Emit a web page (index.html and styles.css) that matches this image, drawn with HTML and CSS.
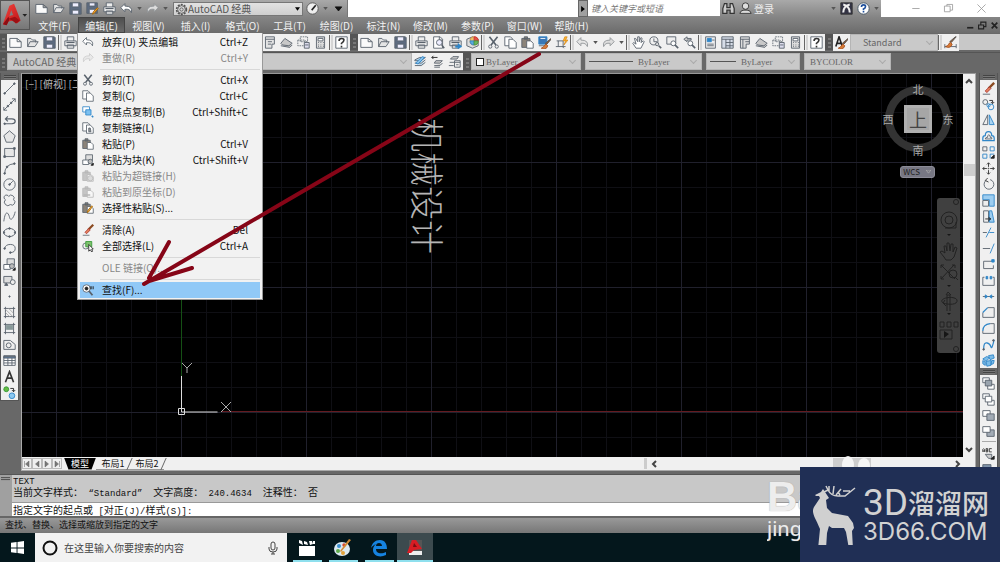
FILE: index.html
```html
<!DOCTYPE html>
<html lang="zh-CN">
<head>
<meta charset="utf-8">
<title>AutoCAD 经典</title>
<link rel="stylesheet" href="styles.css">
</head>
<body>
<header class="head">
  <button class="app" aria-label="应用程序菜单">
    <svg viewBox="0 0 30 30"><defs><linearGradient id="red" x1="0" y1="0" x2="1" y2="1"><stop offset="0" stop-color="#f5463f"/><stop offset="1" stop-color="#b81116"/></linearGradient></defs><path d="M2 25 9 5l5-2 7 18-4 3-4-3-5 1-2 4z" fill="url(#red)"/><path d="m2 25 4 1 3-6-1-3z" fill="#8c0d12"/><path d="m8 19 7-2 5 4-4 3-4-3z" fill="#9d1014"/><path d="m9 16 2-6 2 5z" fill="#7d7f82"/><path d="M23 14h5l-2.500 3z" fill="#222"/></svg>
  </button>
  <div class="bars">
    <div class="title">
      <div class="quick" data-icons="new open save saveas print undo . redo2 ."></div>
      <label class="space"><svg viewBox="0 0 16 16"><g fill="none" stroke="#555"><circle cx="8" cy="8" r="6" stroke-width="2" stroke-dasharray="2.5 1.3"/><circle cx="8" cy="8" r="4.7"/><circle cx="8" cy="8" r="2"/></g></svg><select aria-label="工作空间"><option>AutoCAD 经典</option></select><svg class="drop" viewBox="0 0 6 4"><path d="M0 0h6L3 4z"/></svg></label>
      <div class="quick" data-icons="gauge . down"></div>
      <div class="blank"></div>
      <button class="play" aria-label="展开搜索"><svg viewBox="0 0 5 8"><path d="m0 0 5 4-5 4z"/></svg></button>
      <input class="find" aria-label="搜索" placeholder="键入关键字或短语">
      <div class="info"><span data-icons="binoc user"></span><button class="login">登录</button><span data-icons=". exch"></span><span data-icons="help2 ."></span></div>
      <div class="win" data-icons="min restore close"></div>
    </div>
    <nav class="menus">
      <button>文件(F)</button><button class="on">编辑(E)</button><button>视图(V)</button><button>插入(I)</button><button>格式(O)</button><button>工具(T)</button><button>绘图(D)</button><button>标注(N)</button><button>修改(M)</button><button>参数(P)</button><button>窗口(W)</button><button>帮助(H)</button>
      <span class="docwin" data-icons="dmin drestore dclose"></span>
    </nav>
  </div>
</header>

<div class="row">
  <i class="grip"></i>
  <div class="tools" data-icons="new open save | print preview publish globe | cut copy paste match | block undo redo | sheet markup qset calc | help"></div>
  <i class="grip"></i>
  <div class="tools" data-icons="new open save | print preview publish globe | cut copy paste match block | redo3 . redo2 . | hand zoomt zoomw zoomp | props dcenter palette markup qset calc | help"></div>
  <i class="grip"></i>
  <div class="tools" data-icons="tstyle"></div>
  <label class="combo std"><select aria-label="文字样式"><option>Standard</option></select></label>
  <div class="tools" data-icons="| dstyle"></div>
  <div class="rest"></div>
</div>

<div class="row second">
  <i class="grip"></i>
  <label class="combo ws"><select aria-label="工作空间"><option>AutoCAD 经典</option></select></label>
  <div class="tools" data-icons="layer layerp layers"></div>
  <i class="grip"></i>
  <label class="combo serif color"><b></b><select aria-label="颜色"><option>ByLayer</option></select></label>
  <label class="combo serif ltype"><hr><select aria-label="线型"><option>ByLayer</option></select></label>
  <label class="combo serif lweight"><hr><select aria-label="线宽"><option>ByLayer</option></select></label>
  <label class="combo serif pstyle"><select aria-label="打印样式"><option>BYCOLOR</option></select></label>
</div>

<main class="main">
  <aside class="side">
    <i class="hgrip"></i>
    <div class="stack" data-icons="line xline pline polygon rect arc circle cloud spline ellipse earc insert mkblock point hatch gradient region table mtext addsel"></div>
  </aside>
  <section class="doc">
    <div class="canvas">
      <div class="view">[−] [俯视] [二</div>
      <svg class="ucs" viewBox="0 0 54 56"><path d="M4.500 14v36h36" stroke="#ddd" fill="none"/><path d="M1.500 46.500h6v6h-6z" stroke="#ddd" fill="none"/><path d="m5 1 5 5 5-5m-5 5v5M44 40l10 10m0-10L44 50" stroke="#aaa" fill="none"/></svg>
      <div class="cadtext">机械设计</div>
      <div class="cube"><button class="n">北</button><button class="w">西</button><button class="top">上</button><button class="e">东</button><button class="s">南</button></div>
      <button class="wcs">WCS <svg viewBox="0 0 8 5"><path d="M1 0h6L4 4z" fill="none" stroke="#aaa"/></svg></button>
      <svg class="navbar" viewBox="0 0 23 155"><rect width="23" height="155" rx="3" fill="#404040"/><g fill="none" stroke="#222"><circle cx="19" cy="4" r="2.5"/><circle cx="19" cy="151" r="2.5"/><circle cx="12" cy="22" r="8"/><circle cx="12" cy="22" r="4"/><path d="M8 30h11v-6"/><path d="M7 59 3 54l2-1 3 2-1-7 2 0 1 5 0-8 2 0 1 8 1-7 2 0v8l2-5 2 1-3 9-3 3H9z"/><path d="m4 67 14 14M17 67 4 81M4 70v-3h3m8 0h3v3M4 78v3h3"/><circle cx="16" cy="76" r="4"/><path d="m18 79 3 3M10 113V97h3v16M9 97l2-3 3 3M6 105c-6-5 12-8 14-3 1 5-8 5-14 3l2-3m-2 3 3 3"/><path d="M3 124h4v5H3zm7 0h4v5h-4zm7 0h4v5h-4zM3 132h12v9H3z"/></g><path d="m7 133 5 3-5 4zM10 36h4l-2 2zM10 87h4l-2 2zM10 115h4l-2 2z" fill="#161616"/></svg>
    </div>
    <div class="vbar"><button aria-label="向上"><svg viewBox="0 0 8 6"><path d="m1 5 3-3 3 3"/></svg></button><i></i><button aria-label="向下"><svg viewBox="0 0 8 6"><path d="m1 1 3 3 3-3"/></svg></button></div>
    <div class="tabs">
      <div class="steps" data-icons="first prev next last"></div>
      <button class="tab on">模型</button><button class="tab">布局1</button><button class="tab">布局2</button>
      <div class="fill"></div>
      <i class="split"></i>
      <div class="hbar"><button aria-label="向左"><svg viewBox="0 0 6 8"><path d="M5 1 2 4l3 3"/></svg></button><i></i><button aria-label="向右"><svg viewBox="0 0 6 8"><path d="m1 1 3 3-3 3"/></svg></button></div>
    </div>
  </section>
  <aside class="side right">
    <i class="hgrip"></i>
    <div class="stack" data-icons="erase mcopy mirror offset array move rotate scale stretch trim extend breakp break join chamfer fillet blend explode"></div>
    <i class="hgrip"></i>
    <div class="stack" data-icons="front back above under | abc hback"></div>
  </aside>
</main>

<section class="command">
  <i class="cgrip"></i>
  <div class="lines">
    <div class="log"><p><span>TEXT</span></p><p>当前文字样式：<span> “Standard”&nbsp; </span>文字高度：<span> 240.4634&nbsp; </span>注释性：<span> </span>否</p></div>
    <label class="prompt">指定文字的起点或<span> [</span>对正<span>(J)/</span>样式<span>(S)]:</span><input aria-label="命令行"></label>
  </div>
</section>
<div class="status">查找、替换、选择或缩放到指定的文字</div>
<footer class="task">
  <button class="start" aria-label="开始"><svg viewBox="0 0 14 14"><path d="m0 2 6-1v6H0zm7-1 7-1v7H7zM0 8h6v5l-6-1zm7 0h7v6l-7-1z" fill="#fff"/></svg></button>
  <label class="ask"><svg viewBox="0 0 16 16"><circle cx="8" cy="8" r="6.5" fill="none" stroke="#111" stroke-width="2"/></svg><input aria-label="搜索" placeholder="在这里输入你要搜索的内容"><svg class="mic" viewBox="0 0 10 14"><path d="M3 3q0-2 2-2t2 2v4q0 2-2 2T3 7zM1 6v2q0 3 4 3t4-3V6M5 11v2M3 13h4" fill="none" stroke="#444"/></svg></label>
  <button class="pin" aria-label="电影"><svg viewBox="0 0 18 18"><path d="M1 7h16v10H1z" fill="#fff"/><path d="m1 1 3 1 1 4-4-2zm5 1 3 1 1 3-4-1zm5 0 3 0 1 3-3 1zm4 0h2v3h-2z" fill="#fff"/></svg></button>
  <button class="pin" aria-label="画图"><svg viewBox="0 0 18 18"><ellipse cx="8" cy="10" rx="8" ry="7" fill="#dce9f2"/><circle cx="5" cy="7" r="2" fill="#3a8fd0"/><circle cx="10" cy="6" r="1.700" fill="#d54633"/><circle cx="4" cy="12" r="2" fill="#5fac4a"/><circle cx="9" cy="14" r="2" fill="#e3a23a"/><path d="M17 1 7 13l-1-1L15 0z" fill="#d28b35"/></svg></button>
  <button class="pin" aria-label="Edge"><svg viewBox="0 0 18 18"><path d="M1 9C2 4 5 1 10 1c5 0 7 4 7 9H6c0 5 6 5 10 3v3c-6 3-13 1-13-5 0-3 1-4 3-6-2 1-4 2-5 4zm5-2h6c0-4-6-4-6 0z" fill="#1683e0"/></svg></button>
  <button class="pin on" aria-label="AutoCAD"><svg viewBox="0 0 18 18"><path d="M3 1h13v15H3z" fill="#555"/><path d="M3 12h13v4H3z" fill="#eee"/><path d="m1 14 5-13h4l6 9-8 1-3 3z" fill="#d81d24"/><path d="m7 8 1-4 3 4z" fill="#7c0c10"/></svg></button>
</footer>

<div class="menu" role="menu">
  <button><svg><use href="#i-undo"/></svg><span>放弃(U) 夹点编辑</span><kbd>Ctrl+Z</kbd></button>
  <button disabled><svg><use href="#i-redo2"/></svg><span>重做(R)</span><kbd>Ctrl+Y</kbd></button>
  <hr>
  <button><svg><use href="#i-cut"/></svg><span>剪切(T)</span><kbd>Ctrl+X</kbd></button>
  <button><svg><use href="#i-copy"/></svg><span>复制(C)</span><kbd>Ctrl+C</kbd></button>
  <button><svg><use href="#i-basecopy"/></svg><span>带基点复制(B)</span><kbd>Ctrl+Shift+C</kbd></button>
  <button><svg><use href="#i-linkcopy"/></svg><span>复制链接(L)</span></button>
  <button><svg><use href="#i-paste"/></svg><span>粘贴(P)</span><kbd>Ctrl+V</kbd></button>
  <button><svg><use href="#i-insert"/></svg><span>粘贴为块(K)</span><kbd>Ctrl+Shift+V</kbd></button>
  <button disabled><svg><use href="#i-plink"/></svg><span>粘贴为超链接(H)</span></button>
  <button disabled><svg><use href="#i-pcoord"/></svg><span>粘贴到原坐标(D)</span></button>
  <button><svg><use href="#i-pspecial"/></svg><span>选择性粘贴(S)...</span></button>
  <hr>
  <button><svg><use href="#i-erase"/></svg><span>清除(A)</span><kbd>Del</kbd></button>
  <button><svg><use href="#i-selall"/></svg><span>全部选择(L)</span><kbd>Ctrl+A</kbd></button>
  <hr>
  <button disabled><svg></svg><span>OLE 链接(O)...</span></button>
  <hr>
  <button class="hot"><svg><use href="#i-findi"/></svg><span>查找(F)...</span></button>
</div>

<svg class="pointer" viewBox="0 0 400 236"><path d="m398 3-253 147L3 233M28 191 8 227M51 217 8 230" fill="none" stroke="#860517" stroke-width="4" stroke-linecap="round"/></svg>

<div class="mark"><svg viewBox="0 0 30 20"><ellipse cx="7" cy="10" rx="6" ry="9"/><ellipse cx="23" cy="11" rx="6" ry="8"/></svg><b>Ba</b><span>jing</span></div>
<div class="logo">
  <svg viewBox="0 0 44 60"><path d="M3 10l6-3 2-3 2 3 4 6-3 2 1 8 5 5 16 3 5 7 1 5-2 3 1 18h-4l-3-17-2-4-12 0-3-2-2 7-1 16H6l2-20C3 32-1 28 2 22L8 13l-1-2-3 0z" fill="#d0d0d0"/><path d="M12 7l4-2q3 6 10 6h7l10-8M17 6V1M21 9l1-8M24 10l5-6M16 5l-2-4M31 6h7M28 10l-2-3" stroke="#d0d0d0" stroke-width="1.500" fill="none"/></svg>
  <div><p class="big"><span>3D</span>溜溜网</p><p class="site">3D66.COM</p></div>
</div>
<script src="icons.js"></script>
</body>
</html>
```

FILE: styles.css
```css
* { box-sizing: border-box; }
body {
  margin: 0; position: relative; height: 100vh; overflow: hidden;
  display: flex; flex-direction: column; background: #686868; color: #111;
  font: 10px/16px "Noto Sans CJK SC", "Noto Sans", sans-serif;
}
button, input, select { font: inherit; color: inherit; border: 0; padding: 0; margin: 0; background: none; border-radius: 0; outline: 0; }
select { appearance: none; }
p { margin: 0; }
svg { display: block; }
.sprite { position: absolute; width: 0; height: 0; }

.head { display: flex; flex: none; height: 33px; background: #777; }
.app { width: 30px; height: 30px; background: linear-gradient(#a2a2a2, #777); border: 1px solid #555; }
.app svg { width: 28px; height: 28px; }
.bars { flex: 1; }
.title { display: flex; height: 17px; background: linear-gradient(#a9a9a9, #858585); }
.quick, .tools, .info, .info span, .win, .steps, .docwin { display: flex; align-items: center; }
.quick:first-child { padding-left: 3px; }
.tool { width: 17px; height: 16px; display: grid; place-items: center; flex: none; }
.tool svg { width: 13px; height: 13px; }
.arrow { width: 9px; height: 16px; display: grid; place-items: center; flex: none; }
.arrow svg { width: 5px; height: 3px; }
.space { display: flex; align-items: center; width: 130px; height: 14px; margin: 2px 1px 0 3px; background: linear-gradient(#e2e2e2, #cfcfcf); border: 1px solid #777; color: #555; }
.space svg { width: 13px; height: 13px; margin-left: 1px; }
.space select { flex: 1; line-height: 12px; height: 12px; }
.space .drop { width: 5px; height: 4px; margin-right: 2px; }
.blank { flex: 1; background: #fff; border-left: 1px solid #777; }
.play { width: 10px; background: #a0a0a0; border: 1px solid #666; }
.play svg { width: 4px; height: 6px; margin-left: 2px; }
.find { width: 132px; background: #fff; padding: 0 3px; border-bottom: 1px solid #888; }
.find::placeholder { color: #777; font-style: italic; opacity: 1; font-size: 9px; }
.info { width: 161px; }
.login { flex: 1; text-align: left; color: #eee; }
.win { width: 119px; background: #fff; justify-content: space-between; padding: 0 10px 0 26px; }
.menus { display: flex; height: 16px; background: linear-gradient(#858585, #6c6c6c); color: #f2f2f2; padding-left: 1px; }
.menus button:not(.tool) { width: 47px; line-height: 15px; }
.menus .on { background: linear-gradient(#4e4e4e, #6a6a6a); border: 1px solid #444; }
.docwin { margin-left: auto; }
.docwin .tool { width: 12px; }
.docwin .tool svg { width: 9px; height: 9px; }

.row { display: flex; flex: none; height: 20px; padding: 1px 0 2px; border-bottom: 1px solid #555; background: #686868; }
.grip { width: 8px; flex: none; background: repeating-linear-gradient(#555 0 2px, #777 2px 4px) center/3px 13px no-repeat #555; }
.row > .grip:first-child { width: 7px; }
.tools { background: #f0f0f0; height: 17px; flex: none; }
.tools .sep { width: 4px; height: 15px; border-left: 1px solid #666; border-right: 2px solid #d5d5d5; }
.rest { flex: 1; background: #c8c8c8; }
.combo { position: relative; display: flex; align-items: center; background: #c9c9c9; height: 17px; color: #666; border: 1px solid #b5b5b5; overflow: hidden; }
.combo select { flex: 1; min-width: 0; padding-left: 5px; line-height: 14px; height: 14px; }
.combo::after { content: ""; width: 4px; height: 4px; border: solid #aaa; border-width: 0 1px 1px 0; transform: rotate(45deg); margin: 0 5px 2px 0; }
.std { width: 88px; }
.std select { padding-left: 12px; font-size: 9px; }
.ws { width: 405px; }
.serif { font: 9px/14px "Liberation Serif", serif; margin-right: 4px; }
.color { width: 110px; }
.color b { width: 8px; height: 8px; margin-left: 4px; border: 1px solid #222; background: #fff; }
.color select { padding-left: 2px; }
.ltype { width: 117px; }
.lweight { width: 94px; }
.combo hr { width: 26px; margin: 0 0 0 3px; border: 0; border-top: 1px solid #555; }
.ltype hr { width: 44px; }
.pstyle { width: 87px; }
.second { height: 20px; padding-top: 0; border: 0; }

.main { flex: 1; display: flex; min-height: 0; padding-bottom: 3px; }
.side { width: 19px; flex: none; align-self: flex-start; background: #f0f0f0; border: 1px solid #555; border-width: 0 1px 1px; }
.hgrip { display: block; height: 7px; background: repeating-linear-gradient(#444 0 1px, #777 1px 2px) center/12px 4px no-repeat #666; }
.stack { display: flex; flex-direction: column; align-items: center; }
.stack .sep { width: 14px; height: 4px; border-top: 1px solid #aaa; margin-top: 2px; }
.right { align-self: stretch; overflow: hidden; margin: 0 2px 0 3px; }
.doc { flex: 1; min-width: 0; margin: 0 0 0 2px; border: 1px solid #aaa; border-top: 1px solid #999; display: grid; grid-template: 1fr 13px / 1fr 12px; }
.canvas {
  position: relative; overflow: hidden;
  background:
    linear-gradient(90deg, transparent 200px, #641b20 200px) 0 337px/100% 1px no-repeat,
    linear-gradient(#155015, #155015) 159px 0/1px 337px no-repeat,
    linear-gradient(90deg, #20202c 1px, transparent 1px) 34px 0/125px 100%,
    linear-gradient(#20202c 1px, transparent 1px) 0 88px/100% 125px,
    linear-gradient(90deg, #0f0f14 1px, transparent 1px) 9px 0/25px 100%,
    linear-gradient(#0f0f14 1px, transparent 1px) 0 13px/100% 25px, #000;
}
.view { color: #bbb; padding-left: 3px; line-height: 20px; }
.ucs { position: absolute; left: 155px; top: 288px; width: 54px; height: 56px; }
.cadtext { position: absolute; left: 388px; top: 44px; writing-mode: vertical-rl; text-orientation: sideways; font-size: 34px; line-height: 36px; font-weight: 300; color: #b5b5b5; }
.cube { position: absolute; right: 12px; top: 12px; width: 66px; height: 66px; border: 8px solid #333; border-radius: 50%; display: grid; place-items: center; }
.cube button { color: #aaa; font-size: 11px; line-height: 12px; grid-area: 1 / 1; }
.cube .top { width: 28px; height: 28px; background: #a6a6a6; border: 3px solid #b0b0b0; color: #444; font-size: 18px; line-height: 20px; }
.cube .n { transform: translateY(-30px); }
.cube .s { transform: translateY(31px); }
.cube .w { transform: translateX(-30px); }
.cube .e { transform: translateX(30px); }
.wcs { position: absolute; right: 28px; top: 92px; width: 35px; height: 12px; border-radius: 3px; background: #777783; border: 1px solid #8c8c98; color: #222; font-size: 8px; line-height: 10px; display: flex; align-items: center; justify-content: space-around; }
.wcs svg { width: 7px; height: 4px; }
.navbar { position: absolute; right: 3px; top: 124px; width: 23px; height: 155px; }
.vbar { background: #f0f0f0; display: flex; flex-direction: column; align-items: center; padding: 4px 0; }
.vbar i { width: 11px; height: 12px; background: #cdcdcd; margin-top: 80px; }
.vbar button svg { width: 8px; height: 6px; }
.vbar button:last-child { margin-top: auto; }
.vbar path, .hbar path { fill: none; stroke: #444; stroke-width: 2; }
.tabs { grid-column: 1 / -1; display: flex; align-items: center; background: #f0f0f0; height: 13px; }
.steps .tool { width: 10px; height: 11px; border: 1px solid #bbb; }
.steps .tool svg { width: 8px; height: 8px; }
.tab { position: relative; width: 34px; height: 12px; line-height: 12px; font-size: 9px; border-bottom: 1px solid #999; }
.tab::after { content: ""; position: absolute; right: 0; top: 0; height: 12px; border-right: 1px solid #666; transform: skewX(-24deg); }
.tab.on { color: #fff; background: #000; width: 32px; clip-path: polygon(0 0, 100% 0, 86% 100%, 14% 100%); margin-left: 2px; }
.fill { flex: 1; }
.split { width: 3px; height: 11px; background: #ccc; }
.hbar { width: 328px; display: flex; align-items: center; padding: 0 14px 0 4px; }
.hbar svg { width: 6px; height: 8px; }
.hbar i { width: 38px; height: 11px; background: #cdcdcd; margin: 0 84px 0 auto; }

.command { display: flex; flex: none; height: 44px; border-top: 1px solid #555; border-bottom: 2px solid #666; background: #a0a0a0; }
.cgrip { width: 12px; background: repeating-linear-gradient(#555 0 1px, #999 1px 2px) 1px 2px/9px 4px no-repeat; }
.lines { flex: 1; background: #c8c8c8; }
.lines span { font: 9px/11px "Liberation Mono", monospace; white-space: pre; }
.log { height: 28px; border-bottom: 1px solid #999; }
.log p { line-height: 11px; height: 11px; padding-left: 1px; }
.log p:first-child { font-size: 9px; }
.prompt { display: flex; align-items: baseline; background: #fff; height: 13px; padding-left: 1px; line-height: 13px; }
.prompt input { flex: 1; height: 12px; }
.status { height: 15px; flex: none; line-height: 14px; padding-left: 5px; background: linear-gradient(#999, #777); font-size: 9px; }
.task { display: flex; flex: none; height: 29px; background: #04171c; }
.start { width: 35px; display: grid; place-items: center; }
.start svg { width: 13px; height: 13px; }
.ask { width: 252px; background: #f2f2f2; display: flex; align-items: center; padding: 0 9px 0 7px; margin-right: 2px; }
.ask svg { width: 16px; height: 16px; }
.ask input { flex: 1; padding-left: 6px; }
.ask input::placeholder { color: #444; opacity: 1; }
.ask .mic { width: 10px; height: 14px; }
.pin { width: 36px; display: grid; place-items: center; background: linear-gradient(#8fe0ee, #8fe0ee) center bottom/29px 2px no-repeat; }
.pin svg { width: 18px; height: 18px; }
.pin.on { background-color: #3c4a4e; background-size: 36px 2px; }

.menu { position: absolute; left: 77px; top: 33px; width: 186px; padding: 1px 2px; background: #f2f2f2; border: 1px solid #999; border-top: 0; }
.menu button { display: flex; align-items: center; width: 100%; height: 16px; line-height: 16px; text-align: left; }
.menu svg { width: 12px; height: 12px; margin: 0 8px 0 2px; flex: none; }
.menu kbd { margin-left: auto; padding-right: 12px; font: inherit; }
.menu button:disabled { color: #888; }
.menu button:disabled svg { opacity: .4; filter: grayscale(1); }
.menu hr { border: 0; height: 6px; margin: 0 0 0 20px; background: linear-gradient(#d8d8d8, #d8d8d8) 0 3px/100% 1px no-repeat; }
.menu .hot { background: #91c9f7; }
.pointer { position: absolute; left: 141px; top: 51px; width: 400px; height: 236px; pointer-events: none; }
.mark { position: absolute; left: 767px; top: 455px; width: 133px; height: 90px; overflow: hidden; color: #ededed; font-family: "Liberation Sans", sans-serif; text-shadow: 0 0 1px #999; }
.mark svg { width: 30px; height: 20px; margin-left: 74px; fill: #f5f5f5; }
.mark b, .mark span { display: block; }
.mark b { font-size: 42px; line-height: 44px; }
.mark span { font: 20px/20px "Noto Sans", sans-serif; }
.logo { position: absolute; right: 0; bottom: 0; width: 200px; height: 95px; background: #202f55; color: #d2d2d2; display: flex; align-items: center; gap: 7px; padding-left: 12px; }
.logo svg { width: 44px; height: 60px; }
.logo .big, .logo .site { white-space: nowrap; }
.big { font-size: 27px; line-height: 35px; font-weight: 500; display: flex; align-items: center; }
.big span { font: 37px/35px Roboto, sans-serif; }
.site { font: 24px/24px Inter, sans-serif; }
```

FILE: icons.js
```javascript
// Icon drawings on a 16x16 grid
const D = '#59626c', B = '#2f86c8';
const p = (d, s = D, f = 'none', w = 1.1) => `<path d="${d}" stroke="${s}" fill="${f}" stroke-width="${w}"/>`;
const c = (x, y, r, s = D, f = 'none') => `<circle cx="${x}" cy="${y}" r="${r}" stroke="${s}" fill="${f}" stroke-width="1.1"/>`;
const page = p('M1 3h9l5 4v7H1zM10 3v4h5', D, '#fafafa');
const mag = c(9, 8, 3.5, D, '#eef') + p('m12 11 3 4', D, 'none', 2);
const printer = p('M4 6V1h8v5M1 6h14v6H1zM4 11h8v4H4z', D, '#eee') + p('M3 8h10', D, 'none', 1.5);
const clip = p('M1 3h10v11H1zM4 1h4v3H4z', D, '#8b8379') + p('M7 6h5l3 3v6H7z', D, '#fff');
const two = (a, b) => p('M1 1h8v6H1z', D, a) + p('M7 9h8v6H7z', D, a) + p('M4 4h8v7H4z', D, b);
const brush = p('m15 1-6 7-2-1 7-6z', '#555', '#9a5d30') + p('M8 8c-2 0-2 4-6 5 3 2 7 1 8-3z', '#a44c1c', '#d77b35');
const lowBrush = brush.replace(/<path/g, '<path transform="translate(2 2)"');
const I = {
  new: page,
  open: p('M2 13V3h4l2 2h4v3M2 13l3-6h10l-4 6z', D, '#e4e4e4'),
  save: p('M1 1h13l1 1v13H1z', D, '#5d6b80') + p('M4 1h8v5H4zM4 10h8v5H4z', D, '#eef'),
  saveas: p('M1 1h13v13H1z', D, '#5d6b80') + p('M4 1h7v4H4zM4 9h7v5H4z', D, '#eef') + p('m15 8-5 6-2 1 1-3 5-5z', '#a60', '#f0a63c'),
  print: printer,
  preview: p('M2 1h8l3 3v11H2zM9 1v4h4', D, '#fff') + mag,
  publish: printer + p('M8 12h3v-3l5 4-5 3v-2H8z', B, B, .5),
  globe: p('m1 4 7-3 7 3v8l-7 3-7-3z', D, '#ddd') + c(10, 6, 5, '#c84', '#e9c46a') + p('M10 1a5 5 0 0 1 5 5h-5z', '#c33', '#e0524a') + p('M5 6h5v5a5 5 0 0 1-5-5z', B, '#5aa7de') + p('M10 6h5a5 5 0 0 1-5 5z', '#494', '#6cb55c'),
  cut: p('m3 1 8 10M13 1 5 11', D, 'none', 2) + c(4, 13, 2) + c(12, 13, 2),
  copy: p('M1 1h7l2 2v9H1z', D, '#fff') + p('M6 4h5l4 4v7H6z', D, '#fff'),
  paste: clip,
  match: p('M1 1h10v9H1z', B, '#3b77b5') + p('M3 3h6', '#fff') + p('M1 12h7') + lowBrush,
  block: p('M2 6h8M4 6v7M10 6v7M1 13h12M9 13l2 2', D) + p('m12 1-2 5h3l-2 5 5-6h-3l2-4z', '#c70', '#ffb52e', .7),
  undo: p('M6 2 1 7l5 5V9q6-1 8 4 2-8-8-8z', D, '#fff'),
  redo: p('m10 2 5 5-5 5V9q-6-1-8 4-2-8 8-8z', D, '#fff'),
  redo2: p('m10 2 5 5-5 5V9q-6-1-8 4-2-8 8-8z', '#909498', '#ddd'),
  redo3: p('M6 2 1 7l5 5V9q6-1 8 4 2-8-8-8z', '#909498', '#e5e5e5'),
  sheet: p('M3 1h11v9h-3v5H3zM3 4h11M6 7h5M6 10h4', D, '#e4e4e4'),
  props: p('M2 1h12v14H2z', D, '#eee') + p('M4 3h5v4H4z', B, B) + p('M4 10h8M4 12h8M10 5h3', D),
  dcenter: p('M1 1h14v14H1zM1 4h14M6 4v11M11 4v11M6 8h9M6 12h9', D, '#d6dde8'),
  palette: p('M3 1h11v9h-4v5H3zM3 4h11M6 4v11M9 7h5', D, '#dcdcdc'),
  markup: p('m1 9 5-6 9 6-4 3-8-1zM1 12l11 2 3-3', D, '#c8c8c8'),
  qset: '<path d="M1 5h9v7H1zM4 1h9v6H4z" fill="none" stroke="#59626c" stroke-dasharray="2 1"/>' + p('M9 8h6v7H9z', D, '#dde') + p('M10 11h4'),
  calc: p('M3 1h10v14H3z', D, '#ddd') + p('M5 3h6v3H5z', D, '#fff') + p('M5 8h1m2 0h1m2 0h1M5 11h1m2 0h1m2 0h1M5 13h1m2 0h1m2 0h1'),
  help: p('M1 1h14v14H1z', D, '#fff') + p('M5 6q0-3 3-3t3 2-3 4v1M8 12v2', '#333', 'none', 2),
  hand: p('M5 15 1 9l1-1 3 2-2-7 1.500 0L7 7 7 1h2v6l2-5 1.500 1L11 8l3-2 1 1-4 8z', D, '#fff'),
  zoomt: c(6, 6, 5) + p('M6 3v4h4') + c(10, 10, 2, D, '#ddd') + p('m12 12 3 3', D, 'none', 2),
  zoomw: p('M1 1h11v9H1z', D, '#eee') + c(9, 9, 3, D, '#fff') + p('m11 11 4 4', D, 'none', 2),
  zoomp: p('M5 1 1 4l4 3V5h5V3H5z', D, '#ccc') + c(9, 9, 3, D, '#fff') + p('m11 11 4 4', D, 'none', 2),
  tstyle: p('m1 13 4-12 4 12M3 9h4', '#222', 'none', 2) + lowBrush,
  dstyle: p('M1 10v5M15 10v5M1 13h14') + brush,
  layer: p('m1 6 6-3h7l-5 4H1zM1 10h8l5-4M1 13h8l5-4', D, '#b8d8ee') + p('m2 10 8-8 3 1-8 8z', B, '#8ac2ea'),
  layerp: p('M6 7h8l-3 3H4zM4 13h7l3-3M4 15h7', D, '#ccc') + p('M1 3h7M3 1 1 3l2 2', '#222'),
  layers: p('M3 5h8l2-3H6zM2 9h6M1 13h6', D, '#ccc') + p('M8 7h7v8H8zM8 9h7M10 12h3', D, '#eee'),
  gauge: c(8, 8, 7, '#555', '#eee') + p('m7 10 5-6', '#222', 'none', 2),
  down: p('M4 6h8l-4 5z', '#111', '#111'),
  binoc: p('M3 2h3v5h4V2h3l2 6v6h-5v-4H6v4H1V8z', '#333', '#ccc', 1.5),
  user: c(8, 5, 4, '#333', '#ddd') + p('M1 14q1-4 5-4h4q4 0 5 4z', '#333', '#ddd'),
  exch: p('M1 1h14v14H1z', '#333', '#334') + p('M4 3q8 2 8 10M12 3Q4 5 4 13', '#eee', 'none', 2.5),
  help2: c(8, 8, 7, '#456', '#fff') + p('M5.500 6q0-2.500 2.500-2.500t2.500 2-2.500 3V10M8 11v2', '#1e4f9c', 'none', 2),
  min: p('M4 8h9', '#999', 'none', 1), restore: p('M3 5h7v7H3zM6 5V3h7v7h-3', '#999', 'none', 1), close: p('m3 3 10 10M13 3 3 13', '#999', 'none', 1),
  dmin: p('M2 12h11', '#222', 'none', 3), drestore: p('M1 7h9v7H1zM5 6V2h9v8h-3', '#222', 'none', 2), dclose: p('m3 3 10 10M13 3 3 13', '#222', 'none', 3),
  line: p('M2 14 14 2') + c(2, 14, 1, D, D) + c(14, 2, 1, D, D),
  xline: p('M1 15 15 1M1 11v4h4M11 1h4v4', D) + c(6, 10, 1, D, D) + c(10, 6, 1, D, D),
  pline: p('M2 12h9q4 0 4-3t-4-3H4M6 3 3 6l3 3', D, 'none', 1.5) + c(2, 12, 1, D, D),
  polygon: p('m8 1 7 6-3 8H4L1 7z', D, '#e6e6e6'),
  rect: p('M2 3h12v10H2z', D, '#e6e6e6') + p('M1 12h2v2H1zm12-10h2v2h-2z', D, D),
  arc: p('M2 15Q2 3 14 2') + c(2, 14, 1, D, D) + c(5, 6, 1, D, D) + c(14, 2, 1, D, D),
  circle: c(8, 8, 7) + c(8, 8, 1, D, D) + p('m8 8 4-4'),
  cloud: p('M3 7a3 3 0 1 1 4-4 3.500 3.500 0 1 1 6 4 3.500 3.500 0 1 1-4 6 3.500 3.500 0 1 1-6-6z'),
  spline: p('M1 14C3-2 7 4 8 9s5 2 7-7', D),
  ellipse: '<ellipse cx="8" cy="8" rx="7" ry="5" fill="none" stroke="#59626c" stroke-width="1.200"/>' + c(8, 3, 1, D, D) + c(8, 13, 1, D, D) + c(1, 8, 1, D, D) + c(15, 8, 1, D, D),
  earc: p('M2 8q1-5 7-5t6 5-6 5') + c(2, 8, 1, D, D) + c(9, 13, 1, D, D),
  insert: p('M5 1h9v8H5z', D, '#ddd') + p('M1 8h8v6H1z', D, '#fff') + c(11, 10, 3, D, '#bbb') + p('M15 12v3h-3z', '#222', '#222'),
  mkblock: p('M1 3h10v8H1z', D, '#ddd') + c(12, 10, 3, D, '#eee') + p('m4 11-2 3h4z', D, D),
  point: c(8, 8, .8, D, D),
  hatch: p('M3 1v14M13 1v14M1 3h14M1 13h14') + p('m3 8 5 5M3 4l9 9M7 3l6 6', '#aaa'),
  gradient: p('M3 1v14M13 1v14M1 3h14M1 13h14', D, 'none') + p('M4 4h8v5H4z', '#899', '#899'),
  region: p('M1 3h8l6 5v6H1z', D, '#eee') + c(7, 9, 3),
  table: p('M1 2h14v12H1zM1 8h14M1 11h14M6 5v9M11 5v9', D, '#fff') + p('M1 3h14v2H1z', D, '#5d7da0'),
  mtext: p('m3 15 5-13 5 13M5 10h6', '#333', 'none', 2),
  addsel: c(4, 4, 3, '#393', '#6b4') + c(11, 12, 3.5, B, '#8cc8f0') + p('M9 3h4v4M11 5l2 2 2-2', '#222'),
  erase: p('m15 1-7 7', '#8a4a20', 'none', 3) + p('m9 6-5 5 2 2 5-5z', '#a33', '#e5825a') + p('M1 15h9', D),
  mcopy: c(4, 5, 3) + c(11, 11, 3.5, B) + c(8, 9, 2, B) + p('M9 3h4v3m-2-1 2 2 2-2', '#222'),
  mirror: p('M7 1v12H1z', D, '#eee') + p('M9 1v12h6z', B, '#a9d4f2'),
  offset: p('M1 13v-3q0-3 3-3 0-5 4-5t4 5q3 0 3 3v3z', B, 'none', 1.5) + p('M4 11q0-2 3-2V7q1-2 3 0v2q3 0 2 2z'),
  array: p('M1 1h5v5H1z', D) + p('M10 1h5v5h-5zM1 10h5v5H1zM10 15v-5h5', B) + p('M15 11v4h-4z', '#222', '#222'),
  move: p('M8 1v5M8 10v5M1 8h5M10 8h5M6 3l2-2 2 2M6 13l2 2 2-2M3 6 1 8l2 2M13 6l2 2-2 2', '#333') + c(8, 8, .5, '#333'),
  rotate: p('M5 3a6 6 0 1 0 5-1', D) + p('M7 0 4 3l4 2', '#333'),
  scale: p('M1 1h14v14H9V7H1z', B, '#9dcdf0') + p('M1 8h7v7H1z', D, '#eee'),
  stretch: p('M2 1h6v14H2z', D, '#eee') + p('M9 1h3l3 14H9z', B, '#9dcdf0') + p('M4 11h6M8 9l3 2-3 2', '#222'),
  trim: p('M1 8h5', D) + p('M9 8h6M5 14l6-12', B),
  extend: p('M1 8h9', D) + p('m10 14 5-12', B),
  breakp: p('M13 4H2v9h12V9', D) + p('M12 2h3v3h-3z', B, B),
  break: p('M3 4H1v10h14V4h-2', D) + p('M5 3h2v3H5zm5 0h2v3h-2z', B, B),
  join: p('M1 8h14', D) + p('m4 6 3 2-3 2zM12 6 9 8l3 2z', B, B),
  chamfer: p('M7 2h8v12H1V8', D, '#eee') + p('m1 8 6-6', B, 'none', 1.5),
  fillet: p('M10 2h5v12H1v-3', D, '#eee') + p('M1 11q0-8 9-9', B, 'none', 1.5),
  blend: p('M2 14q0-9 4-8t5 5 4-9', B, 'none', 1.5) + c(2, 14, 1, D, D) + c(14, 3, 1, D, D),
  explode: p('m1 6 5-3 3 2-4 4zM8 2l6-1 1 4-5 2zM5 9l6-1v6l-5 1zM12 8l3 0-1 4-3 1zM1 8l3 2v4l-3-2z', B, '#7bbce8'),
  front: two('#fff', '#9aa4ae'), back: two('#fff', '#fff'),
  above: p('M1 2h9v7H1z', D, '#fff') + p('M6 6h9v8H6z', D, '#a2abb5'),
  under: p('M6 6h9v8H6z', D, '#a2abb5') + p('M1 2h9v7H1z', D, '#fff'),
  abc: p('M1 6V3l1-1 1 1v3M1 5h2M5 6V2h2v4zM5 4h2M12 2H9v4h3', '#222', 'none', 1) + p('M4 9h8v5H8z', D, '#ccc') + p('M15 11v4h-4z', '#222', '#222'),
  hback: p('M1 2h10v8H1z', D, '#7f93aa'),
  first: p('M3 2v12', '#666') + p('M12 2v12L5 8z', '#666', '#777'), prev: p('M12 2v12L5 8z', '#666', '#777'),
  next: p('M4 2v12l7-6z', '#666', '#777'), last: p('M4 2v12l7-6z', '#666', '#777') + p('M13 2v12', '#666'),
  basecopy: p('M1 1h9v7H1z', B, '#fff') + p('M5 5h7v7H5z', B, '#7cc0f0') + p('m13 13 2 2', B, 'none', 2),
  linkcopy: p('M1 1h7l2 2v9H1z', D, '#fff') + p('M6 4h5l4 4v7H6z', D, '#fff') + p('M9 8h2l1 5H9z', D, '#999'),
  plink: clip + c(11, 11, 3.5, D, '#bbb'), pcoord: clip + p('M2 12h9', D, 'none', 2),
  pspecial: clip + p('m14 6-5 7-2 1 1-3 5-6z', '#a60', '#f0b04c'),
  selall: c(5, 8, 4, D, '#eee') + p('M5 2h8v7H5z', '#393', '#7cc06c') + p('m9 6 0 9 2-2 2 3 1-1-1-3 2 0z', '#222', '#fff'),
  findi: c(6, 6, 5, D, '#fff') + c(6, 6, 2, '#222', '#222') + p('m9 9 5 6', D, 'none', 2.5) + p('M11 3v4M13 3v4M15 3v4', '#222')
};
document.body.insertAdjacentHTML('beforeend', '<svg class="sprite">' +
  Object.entries(I).map(([k, v]) => `<symbol id="i-${k}" viewBox="0 0 16 16">${v}</symbol>`).join('') + '</svg>');
document.querySelectorAll('[data-icons]').forEach(el => {
  el.innerHTML = el.dataset.icons.split(' ').map(n =>
    n === '|' ? '<i class="sep"></i>' :
    n === '.' ? '<button class="arrow" aria-label="更多"><svg viewBox="0 0 6 4"><path d="M0 0h6L3 4z" fill="#555"/></svg></button>' :
    `<button class="tool" aria-label="${n}"><svg><use href="#i-${n}"/></svg></button>`).join('');
});
```
